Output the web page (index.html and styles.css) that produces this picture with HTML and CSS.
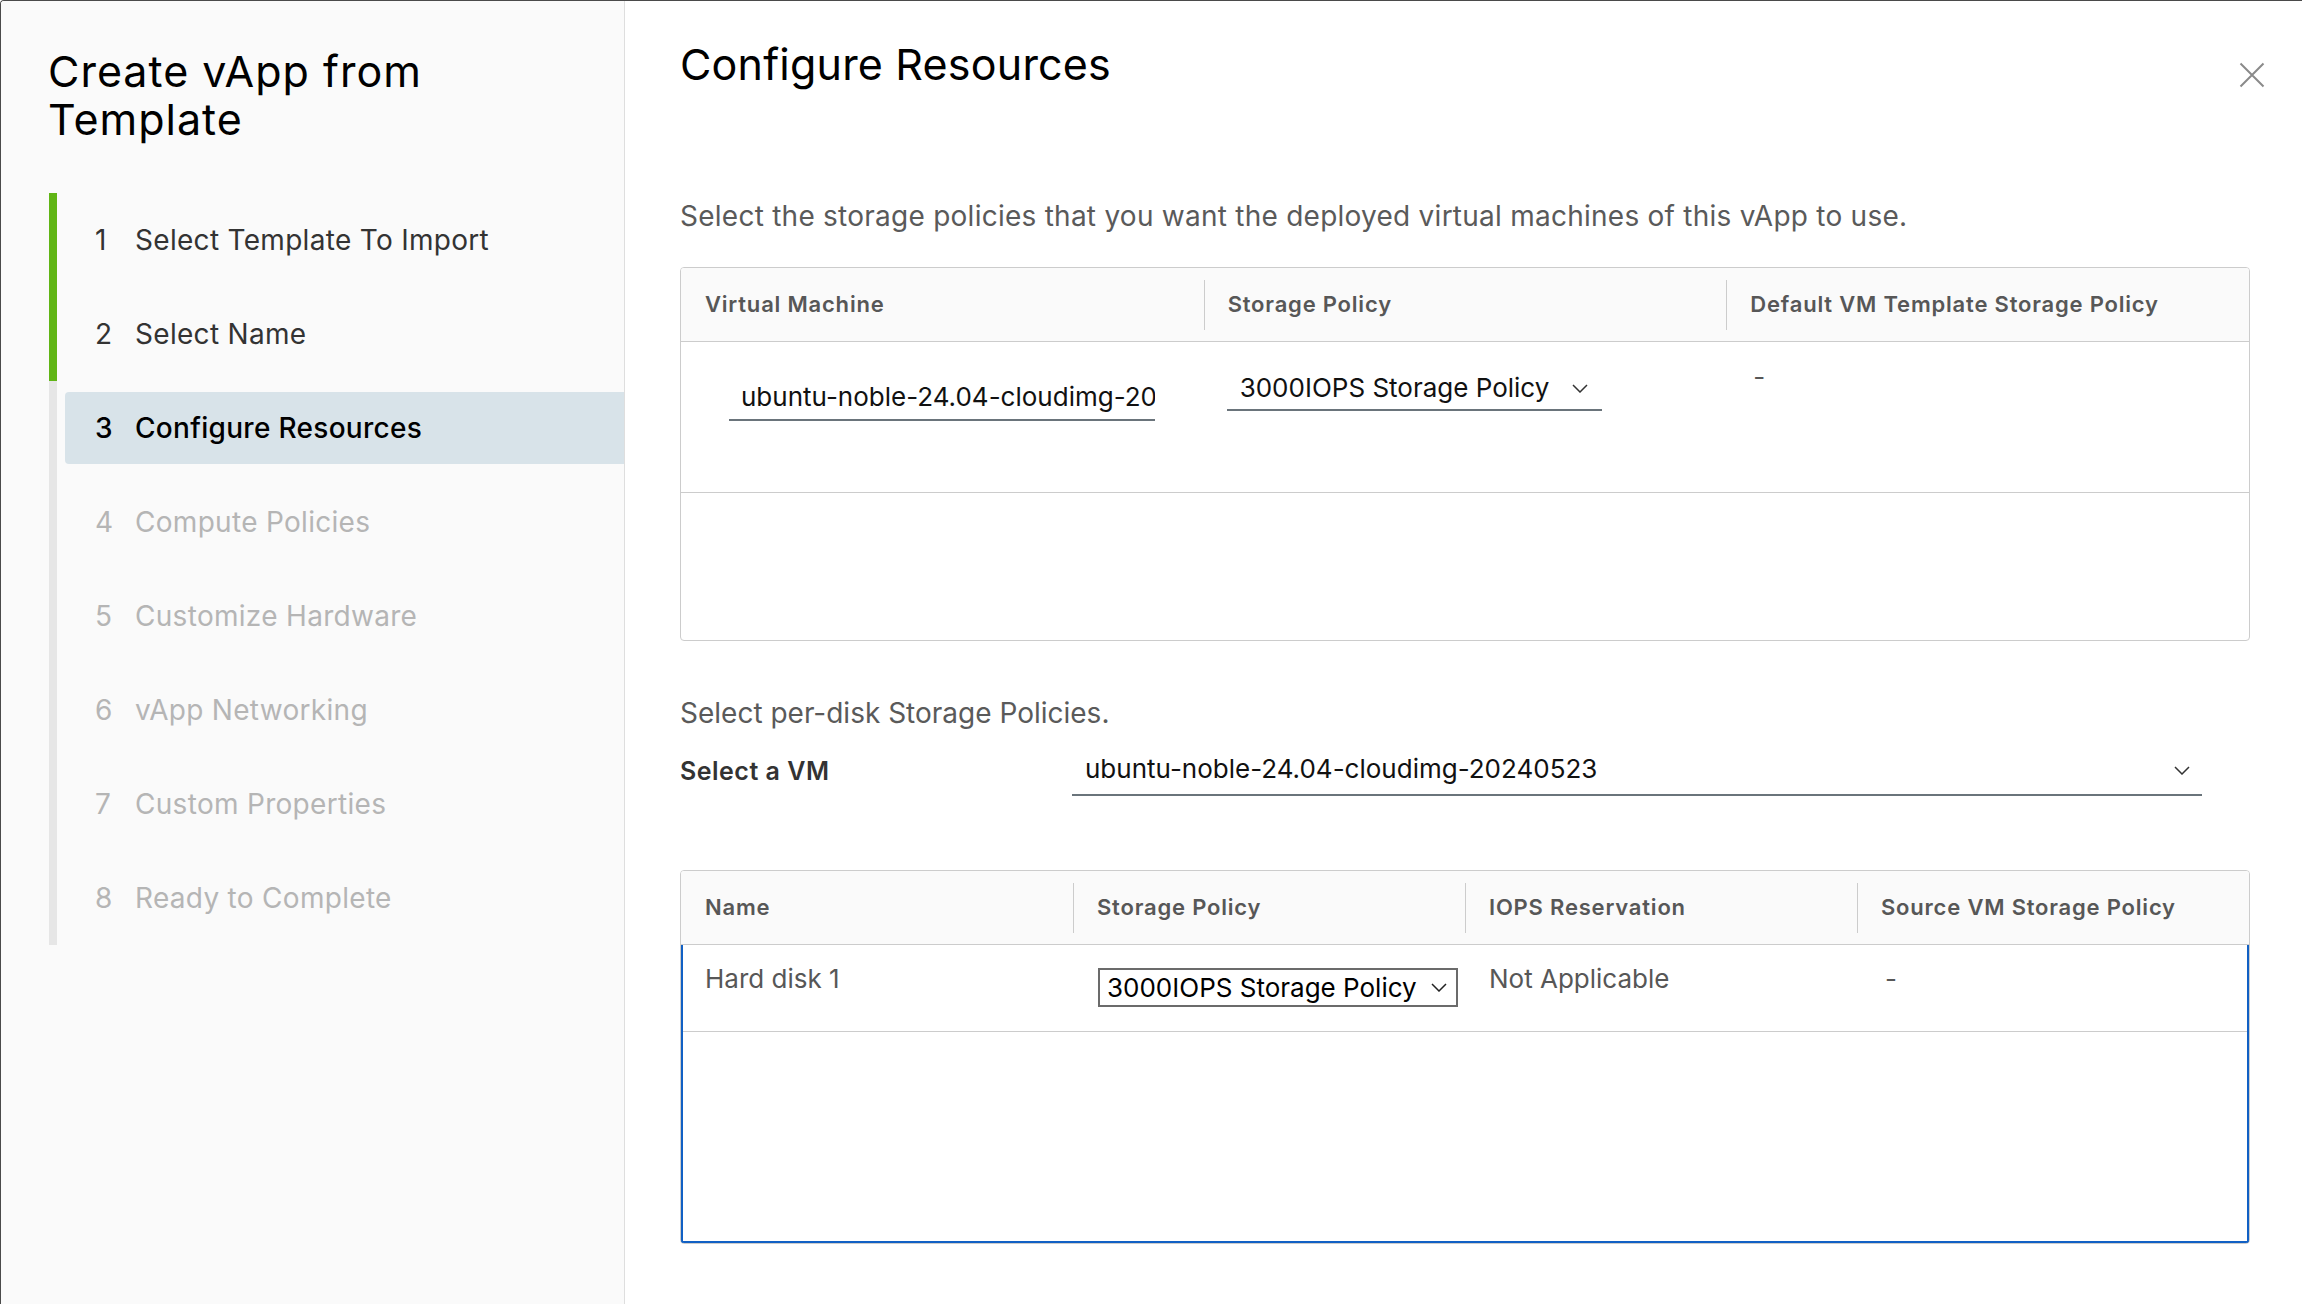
FILE: index.html
```html
<!DOCTYPE html>
<html lang="en">
<head>
<meta charset="utf-8">
<title>Create vApp from Template</title>
<link rel="stylesheet" href="styles.css">
</head>
<body>
<div class="modal">
  <aside class="sidebar">
    <h1 class="wiz-title">Create vApp from<br>Template</h1>
    <ol class="steps">
      <li class="step done"><div class="step-btn"><span class="num">1</span><span class="lbl">Select Template To Import</span></div></li>
      <li class="step done"><div class="step-btn"><span class="num">2</span><span class="lbl">Select Name</span></div></li>
      <li class="step current"><div class="step-btn"><span class="num">3</span><span class="lbl">Configure Resources</span></div></li>
      <li class="step todo"><div class="step-btn"><span class="num">4</span><span class="lbl">Compute Policies</span></div></li>
      <li class="step todo"><div class="step-btn"><span class="num">5</span><span class="lbl">Customize Hardware</span></div></li>
      <li class="step todo"><div class="step-btn"><span class="num">6</span><span class="lbl">vApp Networking</span></div></li>
      <li class="step todo"><div class="step-btn"><span class="num">7</span><span class="lbl">Custom Properties</span></div></li>
      <li class="step todo"><div class="step-btn"><span class="num">8</span><span class="lbl">Ready to Complete</span></div></li>
    </ol>
  </aside>

  <main class="content">
    <button class="close" type="button" aria-label="Close">
      <svg viewBox="0 0 26 26" width="26" height="26"><path d="M1.5 1.5 L24.5 24.5 M24.5 1.5 L1.5 24.5" fill="none" stroke="#8a8a8a" stroke-width="2"/></svg>
    </button>
    <h2 class="page-title">Configure Resources</h2>
    <p class="desc">Select the storage policies that you want the deployed virtual machines of this vApp to use.</p>

    <div class="grid grid-3 vm-grid">
      <div class="grid-head">
        <div class="th">Virtual Machine</div>
        <div class="th sep">Storage Policy</div>
        <div class="th sep">Default VM Template Storage Policy</div>
      </div>
      <div class="grid-body">
        <div class="grid-row vm-row">
          <div class="td"><div class="line-input vm-name">ubuntu-noble-24.04-cloudimg-20240523</div></div>
          <div class="td"><div class="line-select policy-select"><span>3000IOPS Storage Policy</span><svg class="chev" viewBox="0 0 16 9" width="16" height="9"><path d="M1 1 L8 8 L15 1" fill="none" stroke="#333" stroke-width="1.5"/></svg></div></div>
          <div class="td dash">-</div>
        </div>
      </div>
    </div>

    <p class="desc sub">Select per-disk Storage Policies.</p>
    <div class="vm-picker">
      <label class="picker-label">Select a VM</label>
      <div class="line-select picker-select"><span>ubuntu-noble-24.04-cloudimg-20240523</span><svg class="chev" viewBox="0 0 16 9" width="16" height="9"><path d="M1 1 L8 8 L15 1" fill="none" stroke="#333" stroke-width="1.5"/></svg></div>
    </div>

    <div class="grid grid-4 disk-grid">
      <div class="grid-head">
        <div class="th">Name</div>
        <div class="th sep">Storage Policy</div>
        <div class="th sep">IOPS Reservation</div>
        <div class="th sep">Source VM Storage Policy</div>
      </div>
      <div class="grid-body focused">
        <div class="grid-row disk-row">
          <div class="td text">Hard disk 1</div>
          <div class="td"><div class="box-select"><span>3000IOPS Storage Policy</span><svg class="chev" viewBox="0 0 16 9" width="16" height="9"><path d="M1 1 L8 8 L15 1" fill="none" stroke="#222" stroke-width="1.5"/></svg></div></div>
          <div class="td text">Not Applicable</div>
          <div class="td text dash2">-</div>
        </div>
      </div>
    </div>
  </main>
</div>
</body>
</html>
```
FILE: styles.css
```css
* { box-sizing: border-box; margin: 0; padding: 0; }
html, body { width: 2302px; height: 1304px; overflow: hidden; background: #fff; }
body { font-family: Inter, Lato, "Noto Sans", sans-serif; color: #333; }

.modal {
  display: flex;
  height: 1304px;
  border-top: 1px solid #4a4a4a;
  border-left: 1px solid #4a4a4a;
  border-top-left-radius: 4px;
  overflow: hidden;
}

/* ---------- sidebar ---------- */
.sidebar {
  width: 624px;
  flex: none;
  background: #fafafa;
  border-right: 1px solid #dedede;
}
.wiz-title {
  font-size: 43px;
  line-height: 48px;
  font-weight: 400;
  color: #000;
  letter-spacing: 1px;
  padding: 46px 0 0 47px;
}
.steps {
  list-style: none;
  margin: 50px 0 0 48px;
}
.step {
  height: 94px;
  padding: 11px 0 11px 8px;
  border-left: 8px solid #e6e6e6;
}
.step.done { border-left-color: #60b515; }
.step-btn {
  height: 72px;
  display: flex;
  align-items: center;
  padding-left: 30px;
  border-radius: 4px 0 0 4px;
  font-size: 28px;
  letter-spacing: 0.3px;
  color: #333;
}
.num { width: 40px; flex: none; }
.step.current .step-btn { background: #d8e3e9; color: #000; font-weight: 500; }
.step.todo .step-btn { color: #b5b5b5; }

/* ---------- content ---------- */
.content {
  flex: 1;
  position: relative;
  padding: 39px 52px 0 55px;
}
.close {
  position: absolute;
  top: 61px;
  right: 37px;
  width: 26px;
  height: 26px;
  border: 0;
  background: none;
  display: block;
}
.close svg { display: block; }
.page-title {
  font-size: 43px;
  line-height: 48px;
  font-weight: 400;
  color: #000;
  letter-spacing: 0.2px;
}
.desc {
  margin-top: 110px;
  font-size: 28px;
  line-height: 36px;
  letter-spacing: 0.25px;
  color: #5a5a5a;
}
.desc.sub { margin-top: 54px; letter-spacing: 0; }

/* ---------- datagrid ---------- */
.grid {
  border: 1px solid #cccccc;
  border-radius: 4px;
  overflow: hidden;
  position: relative;
}
.vm-grid { margin-top: 33px; }
.disk-grid { margin-top: 74px; }
.grid-head, .grid-row { display: grid; }
.grid-3 .grid-head, .grid-3 .grid-row { grid-template-columns: repeat(3, 1fr); }
.grid-4 .grid-head, .grid-4 .grid-row { grid-template-columns: repeat(4, 1fr); }
.grid-head {
  height: 74px;
  background: #fafafa;
  border-bottom: 1px solid #cccccc;
}
.th {
  position: relative;
  display: flex;
  align-items: center;
  padding-left: 24px;
  padding-bottom: 2px;
  font-size: 22px;
  font-weight: 600;
  letter-spacing: 0.8px;
  color: #575757;
}
.th.sep::before {
  content: "";
  position: absolute;
  left: 0;
  top: 12px;
  height: 50px;
  border-left: 1px solid #cccccc;
}
.grid-body {
  height: 298px;
  position: relative;
}
.grid-body.focused::after {
  content: "";
  position: absolute;
  inset: 0;
  border: 2px solid #1160c4;
  border-top: 0;
  pointer-events: none;
}
.grid-row { border-bottom: 1px solid #cccccc; }
.vm-row { height: 151px; }
.disk-row { height: 87px; }
.td { font-size: 26px; line-height: 34px; color: #575757; min-width: 0; }
.td.text { padding: 17px 0 0 24px; }
.dash { padding: 18px 0 0 27px; }
.dash2 { padding-left: 28px !important; }

.line-input, .line-select {
  height: 42px;
  border-bottom: 2px solid #6a747b;
  font-size: 26px;
  line-height: 34px;
  color: #111;
  white-space: nowrap;
  overflow: hidden;
}
.vm-name {
  margin: 37px 0 0 48px;
  width: 426px;
  padding: 1px 14px 0 12px;
}
.line-select {
  display: flex;
  align-items: center;
  justify-content: space-between;
  padding: 0 14px 2px 13px;
}
.policy-select {
  margin: 27px 0 0 23px;
  width: 375px;
}
.chev { display: block; flex: none; }

.vm-picker {
  display: flex;
  align-items: flex-start;
  margin-top: 23px;
}
.picker-label {
  width: 392px;
  flex: none;
  font-size: 25px;
  line-height: 34px;
  font-weight: 600;
  letter-spacing: 0.5px;
  color: #333;
}
.picker-select {
  width: 1130px;
  padding: 0 12px 8px 13px;
  align-items: flex-end;
}
.picker-select .chev { margin-bottom: 11px; }

.box-select {
  margin: 23px 0 0 25px;
  width: 360px;
  height: 39px;
  border: 2px solid #6b6b6b;
  display: flex;
  align-items: center;
  justify-content: space-between;
  padding: 0 9px 0 7px;
  font-size: 26px;
  line-height: 35px;
  color: #000;
  white-space: nowrap;
  overflow: hidden;
}
```
